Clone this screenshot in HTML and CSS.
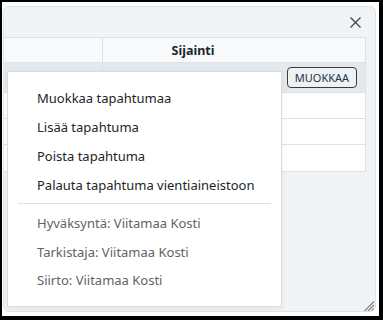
FILE: index.html
```html
<!DOCTYPE html>
<html lang="fi">
<head>
    <meta charset="UTF-8">
    <meta name="viewport" content="width=device-width, initial-scale=1.0">
    <title>Tapahtumat</title>
    <link rel="stylesheet" href="styles.css">
</head>
<body>
    <div class="window">
        <div class="dialog">
            <div class="dialog-header">
                <button type="button" class="close-btn" aria-label="Sulje">
                    <svg width="11" height="11" viewBox="0 0 11 11">
                        <path d="M0.5 0.5 L10.5 10.5 M10.5 0.5 L0.5 10.5" stroke="#4a4a4a" stroke-width="1.4" fill="none"/>
                    </svg>
                </button>
            </div>

            <div class="event-table">
                <div class="table-row header-row">
                    <div class="cell cell-first"></div>
                    <div class="cell cell-location">Sijainti</div>
                    <div class="cell cell-action"></div>
                </div>
                <div class="table-row selected-row">
                    <div class="cell cell-first"></div>
                    <div class="cell cell-location"></div>
                    <div class="cell cell-action">
                        <button type="button" class="edit-btn">MUOKKAA</button>
                    </div>
                </div>
                <div class="table-row">
                    <div class="cell cell-first"></div>
                    <div class="cell cell-location"></div>
                    <div class="cell cell-action"></div>
                </div>
                <div class="table-row">
                    <div class="cell cell-first"></div>
                    <div class="cell cell-location"></div>
                    <div class="cell cell-action"></div>
                </div>
                <div class="table-row last-row">
                    <div class="cell cell-first"></div>
                    <div class="cell cell-location"></div>
                    <div class="cell cell-action"></div>
                </div>
            </div>

            <!-- kontekstivalikko -->
            <ul class="context-menu">
                <li class="menu-item">Muokkaa tapahtumaa</li>
                <li class="menu-item">Lisää tapahtuma</li>
                <li class="menu-item">Poista tapahtuma</li>
                <li class="menu-item">Palauta tapahtuma vientiaineistoon</li>
                <li class="menu-divider"></li>
                <li class="menu-item menu-info">Hyväksyntä: Viitamaa Kosti</li>
                <li class="menu-item menu-info">Tarkistaja: Viitamaa Kosti</li>
                <li class="menu-item menu-info">Siirto: Viitamaa Kosti</li>
            </ul>

            <div class="resize-grip">
                <svg width="14" height="14" viewBox="0 0 14 14">
                    <path d="M13 1.5 L1.5 13 M13 5 L5 13 M13 8.5 L8.5 13 M13 12 L12 13" stroke="#7a7a7a" stroke-width="1.1" fill="none"/>
                </svg>
            </div>
        </div>
    </div>
</body>
</html>
```

FILE: styles.css
```css
:root {
    --panel-color: #f0f4f7;
    --border-color: #dee2e6;
    --text-color: #212529;
    --muted-color: #5f6368;
}

* {
    box-sizing: border-box;
    margin: 0;
    padding: 0;
}

body {
    background-color: #000;
    padding: 2px 4px 4px 2px;
    font-family: 'Noto Sans', 'Open Sans', sans-serif;
    color: var(--text-color);
}

.window {
    background: #fff;
    height: 314px;
    padding: 4px 3px 4px 1px;
}

.dialog {
    position: relative;
    height: 100%;
    background-color: var(--panel-color);
    border: 1px solid #dde5ea;
    border-radius: 6px;
    overflow: hidden;
}

.dialog-header {
    height: 30px;
    display: flex;
    align-items: center;
    justify-content: flex-end;
    padding-right: 14px;
}

.close-btn {
    background: none;
    border: none;
    width: 11px;
    height: 11px;
    display: flex;
    cursor: pointer;
}

.event-table {
    margin-right: 9px;
    border-top: 1px solid var(--border-color);
    border-right: 1px solid var(--border-color);
}

.table-row {
    display: grid;
    grid-template-columns: 99px 180px 1fr;
    height: 26px;
    background: #fff;
    border-bottom: 1px solid var(--border-color);
}

.header-row {
    height: 25px;
    background-color: #f8f9fa;
}

.selected-row {
    height: 30px;
    background-color: #e3e9ec;
}

.last-row {
    height: 27px;
}

.cell-first {
    border-right: 1px solid var(--border-color);
}

.cell-location {
    display: flex;
    align-items: center;
    justify-content: center;
    font-size: 12.5px;
    font-weight: bold;
}

.cell-action {
    display: flex;
    align-items: center;
    padding-left: 4px;
}

.edit-btn {
    width: 70px;
    height: 21px;
    border: 1px solid #3a3a3a;
    border-radius: 4px;
    background-color: #eef2f4;
    font-family: inherit;
    font-size: 11px;
    color: #243447;
    cursor: pointer;
}

.context-menu {
    position: absolute;
    left: 3px;
    top: 64px;
    width: 275px;
    height: 236px;
    list-style: none;
    background: #fff;
    border: 1px solid #dcdcdc;
    box-shadow: 0 2px 6px rgba(0, 0, 0, 0.06);
    padding: 12px 0 9px;
}

.menu-item {
    height: 29px;
    line-height: 29px;
    padding-left: 29px;
    font-size: 13px;
    white-space: nowrap;
    cursor: pointer;
}

.menu-info {
    height: 28.5px;
    line-height: 28.5px;
    color: var(--muted-color);
    cursor: default;
}

.menu-divider {
    height: 1px;
    margin: 3px 10px 5px;
    background-color: #e0e0e0;
}

.resize-grip {
    position: absolute;
    right: 0;
    bottom: 0;
    width: 14px;
    height: 14px;
}
```
